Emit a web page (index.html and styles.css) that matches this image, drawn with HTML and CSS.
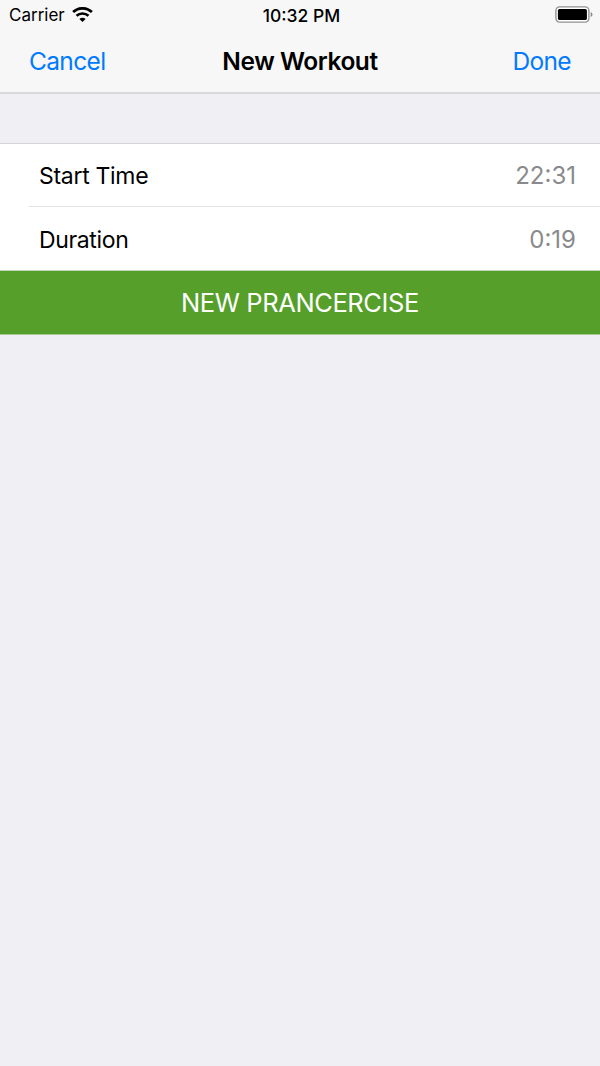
FILE: index.html
```html
<!DOCTYPE html>
<html lang="en">
<head>
<meta charset="utf-8">
<title>New Workout</title>
<link rel="stylesheet" href="styles.css">
</head>
<body>
<header class="top">
  <div class="status">
    <div class="carrier"><span class="carrier-name">Carrier</span>
      <svg class="wifi" width="21" height="15" viewBox="0 0 21 15" fill="none" stroke="#000"><path d="M1.1 5.1a13.6 13.6 0 0 1 18.8 0" stroke-width="2.7"/><path d="M4.5 8.8a8.8 8.8 0 0 1 12 0" stroke-width="2.6"/><path d="M7.4 11.9a5 5 0 0 1 6.2 0L10.5 14.9z" fill="#000" stroke="none"/></svg>
    </div>
    <span class="clock">10:32 PM</span>
    <svg class="battery" width="38" height="17" viewBox="0 0 38 17"><rect x=".9" y=".9" width="33" height="15.2" rx="3.8" fill="#fff" stroke="#929292" stroke-width="1.4"/><rect x="2.9" y="2.9" width="29" height="11.2" rx="1.6"/><path d="M35.7 6q1.8.7 1.8 2.5t-1.8 2.5z" fill="#888"/></svg>
  </div>
  <nav class="nav">
    <a class="action"><span class="cancel">Cancel</span></a>
    <h1 class="title">New Workout</h1>
    <a class="action end"><span class="done">Done</span></a>
  </nav>
</header>
<main>
  <section class="rows">
    <div class="row"><span class="label">Start Time</span><span class="value">22:31</span></div>
    <div class="row"><span class="label duration">Duration</span><span class="value short">0:19</span></div>
  </section>
  <button class="create">NEW PRANCERCISE</button>
</main>
</body>
</html>
```
FILE: styles.css
```css
* { box-sizing: border-box; }
body { margin: 0; min-height: 1066px; background: #efeff4; color: #000; font-family: Inter, "Liberation Sans", sans-serif; }
.top { height: 94px; background: #f7f7f7; border-bottom: 2px solid #d9d9dc; }
.status { height: 30px; padding: 0 7px 0 9px; display: grid; grid-template-columns: 1fr auto 1fr; align-items: center; font-size: 17px; }
.carrier { display: flex; align-items: center; gap: 7px; }
.wifi { margin-top: -2px; }
.clock { font-weight: 500; font-size: 17.5px; padding-left: 1px; }
.battery { justify-self: end; margin-top: -1px; }
.nav { height: 61px; padding: 0 29px; display: grid; grid-template-columns: 1fr auto 1fr; align-items: center; font-size: 24.5px; }
.action { color: #007aff; }
.cancel { letter-spacing: -0.65px; }
.done { letter-spacing: -0.65px; }
.end { text-align: right; }
.title { margin: 0; font-size: 24.5px; font-weight: 600; letter-spacing: -0.45px; }
.rows { margin-top: 49px; background: #fff; border-top: 1px solid #d5d5d8; border-bottom: 1px solid #c3d6b8; padding-left: 29px; }
.row { height: 62px; padding: 1px 24px 0 10px; display: flex; justify-content: space-between; align-items: center; font-size: 23px; }
.row + .row { height: 64px; padding-top: 2px; border-top: 1px solid #e2e2e4; }
.label { letter-spacing: -0.3px; }
.duration { letter-spacing: -0.35px; }
.value { color: #8a8a8c; font-size: 24px; font-weight: 400; }
.create { display: block; width: 100%; height: 64px; padding: 0; border: 0; border-bottom: 1px solid #a5cb92; background: #569f2b; color: #fff; font: 400 25.5px Inter, sans-serif; letter-spacing: -0.4px; }
```
